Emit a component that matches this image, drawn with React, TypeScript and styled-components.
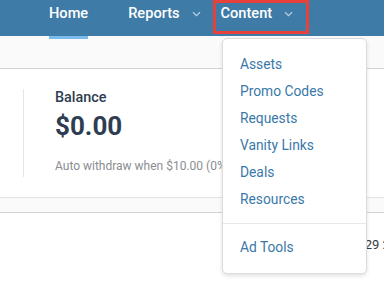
import React from "react";
import styled, { createGlobalStyle } from "styled-components";

const Global = createGlobalStyle`
  html, body { margin: 0; padding: 0; background: #ffffff; }
  body { font-family: Roboto, "Liberation Sans", Arial, sans-serif; overflow: hidden; }
  *, *::before, *::after { box-sizing: border-box; }
`;

const Page = styled.div`
  position: relative;
  width: 384px;
  height: 283px;
  overflow: hidden;
  background: #ffffff;
`;

const Header = styled.header`
  height: 36px;
  background: #3e7ba6;
  display: flex;
  padding-left: 29px;
`;

const NavItem = styled.div<{ $active?: boolean; $highlight?: boolean; $menu?: boolean }>`
  position: relative;
  height: 36px;
  padding: 5px ${(p) => (p.$menu ? 0 : 20)}px 0 20px;
  display: flex;
  align-items: flex-start;
  gap: 12px;
  color: #ffffff;
  font-size: 14.6px;
  font-weight: 500;
  line-height: 17px;
  white-space: nowrap;

  &::after {
    content: "";
    display: ${(p) => (p.$active ? "block" : "none")};
    position: absolute;
    left: 20px;
    right: 20px;
    bottom: -3px;
    height: 3px;
    background: #7bbcef;
  }

  &::before {
    content: "";
    display: ${(p) => (p.$highlight ? "block" : "none")};
    position: absolute;
    left: 12px;
    top: 0;
    width: 96px;
    height: 34px;
    border: 3px solid #e6413a;
  }
`;

const Chevron = styled.svg`
  width: 9px;
  height: 6px;
  margin-top: 6px;
  flex: none;
`;

const Band = styled.div<{ $h: number; $top?: string }>`
  height: ${(p) => p.$h}px;
  background: #fafafa;
  border-top: ${(p) => p.$top ?? "none"};
  border-bottom: 1px solid #d3d3d3;
`;

const Card = styled.section`
  display: flex;
  background: #ffffff;
  padding: 20px 0;
  height: 128px;
`;

const SideCell = styled.div`
  width: 24px;
  border-right: 1px solid #e6e6e6;
`;

const BalanceCell = styled.div`
  padding-left: 31px;
  display: flex;
  flex-direction: column;
`;

const Label = styled.div`
  font-size: 14.4px;
  font-weight: 500;
  line-height: 17px;
  color: #2e3d51;
`;

const Amount = styled.div`
  margin-top: 5px;
  font-size: 26px;
  font-weight: 700;
  line-height: 30px;
  color: #2e3d51;
`;

const Note = styled.div`
  margin-top: 18px;
  font-size: 12px;
  line-height: 15px;
  color: #8a8d91;
  white-space: nowrap;
`;

const TableRow = styled.div`
  padding: 24px 0 0 344px;
  font-size: 13px;
  line-height: 16px;
  color: #333a44;
  white-space: nowrap;
`;

const Menu = styled.nav`
  position: absolute;
  left: 222px;
  top: 38px;
  width: 145px;
  background: #ffffff;
  border: 1px solid #dcdcdc;
  border-radius: 5px;
  box-shadow: 0 2px 4px rgba(0, 0, 0, 0.12);
  padding: 12px 0 12px;
`;

const MenuItem = styled.div`
  height: 27px;
  line-height: 27px;
  padding-left: 17px;
  font-size: 13.8px;
  color: #3a78a9;
  white-space: nowrap;
`;

const MenuDivider = styled.div`
  height: 1px;
  background: #e8e8e8;
  margin: 10px 0;
`;

const ChevronIcon = () => (
  <Chevron viewBox="0 0 9 6">
    <path d="M1 1.2 L4.5 4.6 L8 1.2" fill="none" stroke="#b9d0e2" strokeWidth="1.2" />
  </Chevron>
);

export default function App() {
  return (
    <Page>
      <Global />
      <Header>
        <NavItem $active>Home</NavItem>
        <NavItem $menu>
          Reports
          <ChevronIcon />
        </NavItem>
        <NavItem $menu $highlight>
          Content
          <ChevronIcon />
        </NavItem>
      </Header>
      <Band $h={33} />
      <Card>
        <SideCell />
        <BalanceCell>
          <Label>Balance</Label>
          <Amount>$0.00</Amount>
          <Note>Auto withdraw when $10.00 (0% fee)</Note>
        </BalanceCell>
      </Card>
      <Band $h={16} $top="1px solid #e2e3e8" />
      <TableRow>Jul 29 2023</TableRow>
      <Menu>
        <MenuItem>Assets</MenuItem>
        <MenuItem>Promo Codes</MenuItem>
        <MenuItem>Requests</MenuItem>
        <MenuItem>Vanity Links</MenuItem>
        <MenuItem>Deals</MenuItem>
        <MenuItem>Resources</MenuItem>
        <MenuDivider />
        <MenuItem>Ad Tools</MenuItem>
      </Menu>
    </Page>
  );
}
